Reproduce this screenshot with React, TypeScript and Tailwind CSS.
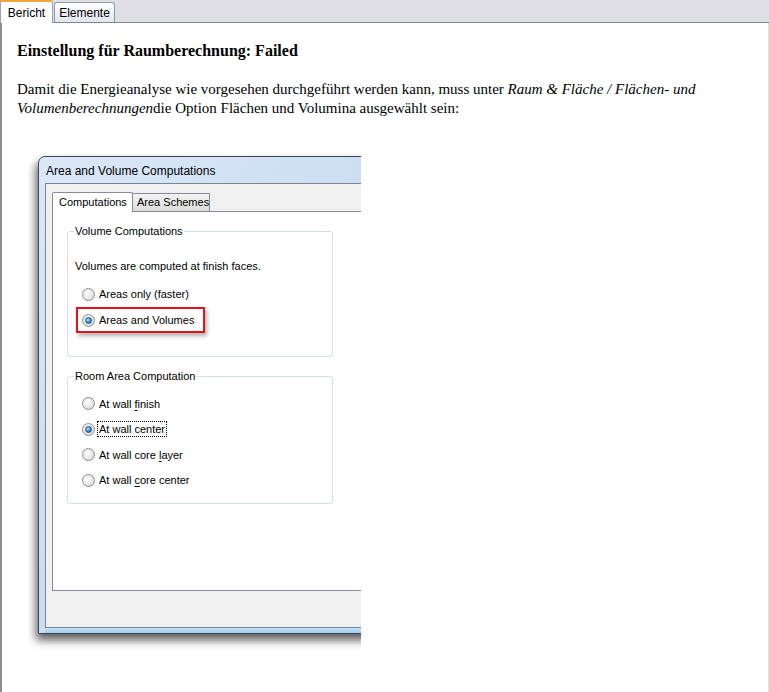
import React from "react";

function Radio({ checked }: { checked?: boolean }) {
  return (
    <span className="w-[13px] h-[13px] shrink-0 rounded-full border border-[#8e8f8f] bg-[radial-gradient(circle_at_40%_40%,#ffffff,#e6e6e6_55%,#c9c9c9)] flex items-center justify-center">
      {checked && (
        <span className="w-[7px] h-[7px] rounded-full border border-[#1c5180] bg-[radial-gradient(circle_at_35%_35%,#b5e2ff,#3a8fd6_55%,#0d4c8c)]" />
      )}
    </span>
  );
}

function Option({ checked, children, focus }: { checked?: boolean; children: React.ReactNode; focus?: boolean }) {
  return (
    <div className="h-[25.5px] flex items-center pl-[14px] gap-[2px] whitespace-nowrap">
      <Radio checked={checked} />
      <span className={focus ? "border border-dotted border-black px-px leading-[14px]" : "px-[2px] leading-[14px]"}>{children}</span>
    </div>
  );
}

export default function App() {
  return (
    <div className="w-[769px] h-[692px] bg-white flex flex-col overflow-hidden">
      {/* top tab strip */}
      <div className="h-[23px] shrink-0 bg-[#dfdfe4] border-b border-[#7d8b8b] flex items-end font-['Liberation_Sans',Arial,sans-serif] text-[12px] text-black">
        <div className="h-[23px] -mb-px w-[53px] bg-white border-t-2 border-t-[#f0a43a] border-l border-r border-[#9aa4a8] rounded-tr-[2px] flex items-center justify-center">
          Bericht
        </div>
        <div className="ml-px h-[20px] w-[61px] bg-gradient-to-b from-white to-[#e2e5ee] border border-b-0 border-[#8d9ba2] rounded-t-[3px] flex items-center justify-center">
          Elemente
        </div>
      </div>

      {/* report body */}
      <div className="flex-1 border-l-2 border-[#8e8e8e] border-r border-r-[#e6e3d8] pl-[15px] font-['Liberation_Serif','Times_New_Roman',serif] text-black">
        <h2 className="mt-[18px] text-[16px] leading-[20px] font-bold">Einstellung für Raumberechnung: Failed</h2>
        <p className="mt-[19px] text-[15px] leading-[19px] pr-[46px]">
          Damit die Energieanalyse wie vorgesehen durchgeführt werden kann, muss unter <i>Raum &amp; Fläche / Flächen- und Volumenberechnungen</i>die Option Flächen und Volumina ausgewählt sein:
        </p>

        {/* screenshot of the dialog */}
        <div className="mt-[27px] ml-[11px] w-[333px] h-[515px] pl-[10px] pt-[11px] overflow-hidden">
          <div className="w-[420px] h-[478px] flex flex-col border border-[#3d4752] rounded-t-[7px] bg-gradient-to-br from-[#dbe8f7] to-[#b8d0ec] px-[6px] shadow-[-2px_6px_10px_rgba(0,0,0,0.65)] font-['Liberation_Sans',Arial,sans-serif] text-[11px] text-black whitespace-nowrap">
            <div className="h-[26px] shrink-0 flex items-center pl-px pt-[2px] text-[12px]">Area and Volume Computations</div>

            <div className="h-[445px] shrink-0 bg-[#f0f0f0] border border-r-0 border-[#7b8591] pl-[6px] pt-[8px]">
              <div className="flex items-end h-[19px]">
                <div className="relative z-10 h-[20px] -mb-px w-[81px] bg-white border border-b-0 border-[#898c95] rounded-t-[2px] flex items-center pl-[6px]">
                  Computations
                </div>
                <div className="h-[18px] w-[77px] bg-gradient-to-b from-[#f3f3f3] to-[#dcdcdc] border border-l-0 border-b-0 border-[#898c95] flex items-center pl-[4px]">
                  Area Schemes
                </div>
              </div>

              <div className="h-[380px] bg-white border border-r-0 border-[#898c95] pl-[14px] pt-[19px]">
                {/* Volume Computations */}
                <div className="w-[266px] h-[126px] border border-[#d5dfe5] rounded-[3px] bg-white">
                  <span className="block w-fit -mt-[8px] ml-[6px] px-px leading-[15px] bg-white">Volume Computations</span>
                  <div className="mt-[19px] h-[16px] leading-[16px] pl-[7px]">Volumes are computed at finish faces.</div>
                  <div className="mt-[7px] h-[26px] flex items-center pl-[14px] gap-[2px]">
                    <Radio />
                    <span className="px-[2px]">Areas only (faster)</span>
                  </div>
                  <div className="h-[26px] w-[129px] ml-[8px] flex items-center pl-[4px] gap-[2px] border-2 border-[#e0141b] shadow-[2px_3px_4px_rgba(0,0,0,0.3)]">
                    <Radio checked />
                    <span className="px-[2px]">Areas and Volumes</span>
                  </div>
                </div>

                {/* Room Area Computation */}
                <div className="mt-[19px] w-[266px] h-[128px] border border-[#d5dfe5] rounded-[3px] bg-white">
                  <span className="block w-fit -mt-[8px] ml-[6px] px-px leading-[15px] bg-white">Room Area Computation</span>
                  <div className="mt-[7px]">
                    <Option>
                      At wall <u className="underline-offset-2">f</u>inish
                    </Option>
                    <Option checked focus>
                      At wall center
                    </Option>
                    <Option>
                      At wall core <u className="underline-offset-2">l</u>ayer
                    </Option>
                    <Option>
                      At wall <u className="underline-offset-2">c</u>ore center
                    </Option>
                  </div>
                </div>
              </div>
            </div>

            <div className="flex-1 bg-gradient-to-b from-[#c8e2fa] to-[#9fcbf2]" />
          </div>
        </div>
      </div>
    </div>
  );
}
